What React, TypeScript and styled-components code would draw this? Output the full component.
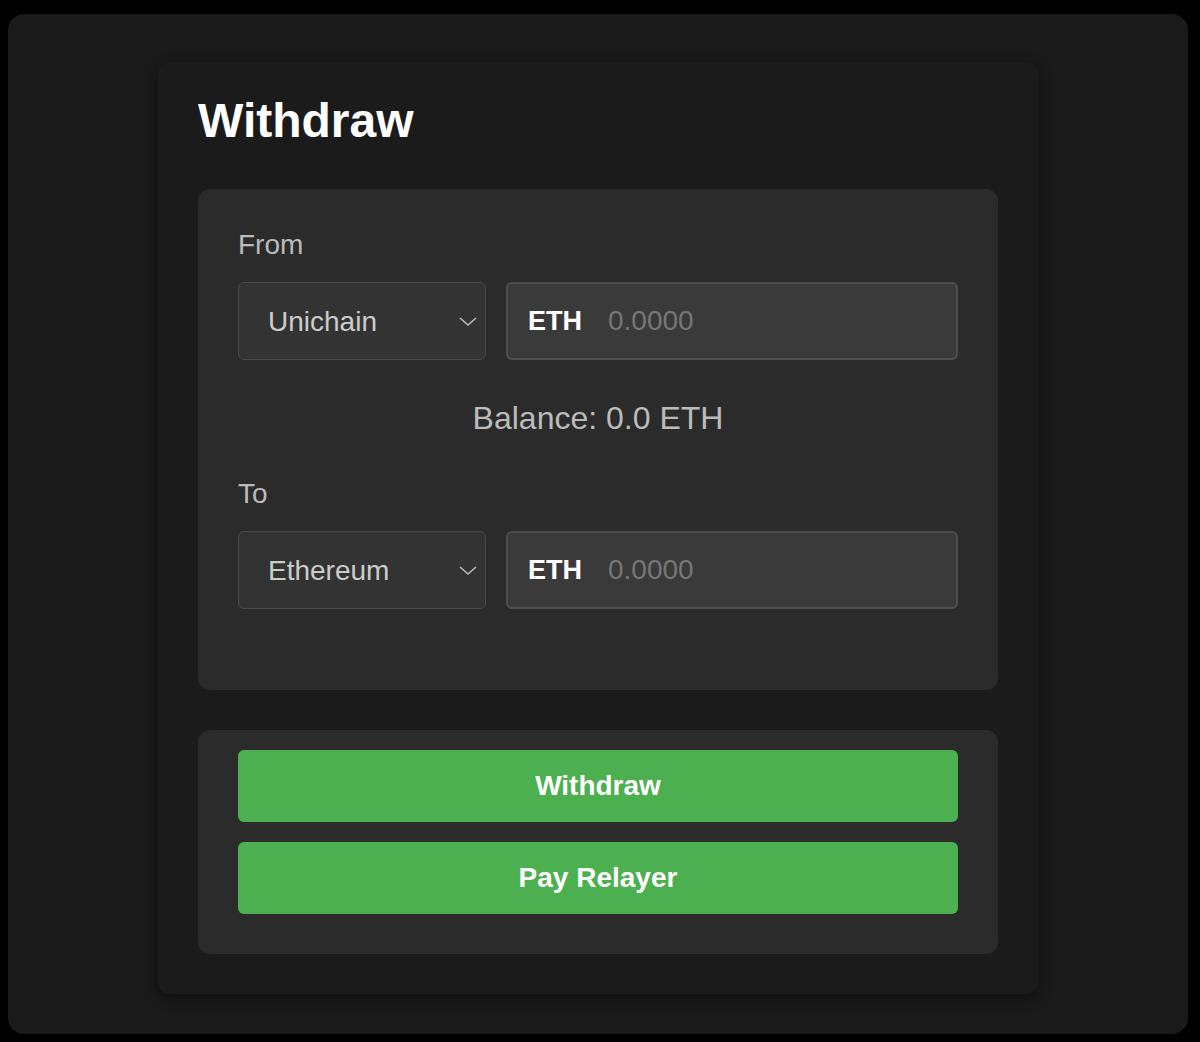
import React from "react"
import styled, { createGlobalStyle } from "styled-components"

const GlobalStyle = createGlobalStyle`
  html, body {
    margin: 0;
    padding: 0;
    background: #000000;
  }
  body {
    font-family: "Liberation Sans", Arial, sans-serif;
  }
`

const Screen = styled.div`
  padding: 14px 12px 8px 8px;
  height: 1042px;
  box-sizing: border-box;
`

const Window = styled.div`
  background: #1a1a1a;
  border-radius: 16px;
  height: 1020px;
  box-sizing: border-box;
  padding-top: 48px;
  display: flex;
  justify-content: center;
  align-items: flex-start;
`

const Card = styled.div`
  width: 880px;
  box-sizing: border-box;
  background: #1b1b1b;
  border-radius: 12px;
  box-shadow: 0 4px 14px rgba(0, 0, 0, 0.45);
  padding: 35px 40px 40px;
`

const Title = styled.h1`
  margin: 0 0 44px;
  font-size: 48px;
  line-height: 48px;
  font-weight: 700;
  color: #ffffff;
`

const Panel = styled.div<{ $compact?: boolean }>`
  background: #2b2b2b;
  border-radius: 12px;
  padding: ${(p) => (p.$compact ? "20px 40px 40px" : "40px 40px 81px")};
  display: flex;
  flex-direction: column;
  gap: ${(p) => (p.$compact ? "20px" : "0")};
  & + & {
    margin-top: 40px;
  }
`

const Label = styled.div`
  font-size: 28px;
  line-height: 32px;
  color: #bbbbbb;
  margin-bottom: 21px;
`

const Row = styled.div`
  display: flex;
  gap: 20px;
  height: 78px;
`

const SelectWrap = styled.div`
  position: relative;
  width: 248px;
  flex: none;
`

const Select = styled.select`
  appearance: none;
  width: 100%;
  height: 100%;
  box-sizing: border-box;
  background: #333333;
  border: 1px solid #4a4a4a;
  border-radius: 6px;
  color: #cccccc;
  font-family: "Liberation Sans", Arial, sans-serif;
  font-size: 28px;
  padding: 0 40px 0 29px;
  outline: none;
`

const Chevron = styled.svg`
  position: absolute;
  right: 8px;
  top: 50%;
  margin-top: -7px;
  pointer-events: none;
`

const AmountBox = styled.div`
  flex: 1;
  min-width: 0;
  display: flex;
  align-items: center;
  gap: 26px;
  background: #3a3a3a;
  border: 2px solid #4e4e4e;
  border-radius: 6px;
  padding: 0 20px;
`

const Currency = styled.span`
  font-size: 27px;
  font-weight: 700;
  color: #ffffff;
`

const AmountInput = styled.input`
  flex: 1;
  min-width: 0;
  width: 100%;
  background: transparent;
  border: none;
  outline: none;
  padding: 0;
  font-family: "Liberation Sans", Arial, sans-serif;
  font-size: 28px;
  color: #ffffff;
  &::placeholder {
    color: #777777;
  }
`

const Balance = styled.div`
  text-align: center;
  font-size: 32px;
  line-height: 36px;
  color: #bbbbbb;
  margin: 40px 0 42px;
`

const Button = styled.button`
  height: 72px;
  border: none;
  border-radius: 6px;
  background: #4caf50;
  color: #ffffff;
  font-family: "Liberation Sans", Arial, sans-serif;
  font-size: 28px;
  font-weight: 700;
  cursor: pointer;
`

const ChainSelect = ({ value }: { value: string }) => (
  <SelectWrap>
    <Select defaultValue={value}>
      <option>Unichain</option>
      <option>Ethereum</option>
    </Select>
    <Chevron width="20" height="14" viewBox="0 0 20 14">
      <path d="M2 4 L10 11 L18 4" fill="none" stroke="#bbbbbb" strokeWidth="1.6" />
    </Chevron>
  </SelectWrap>
)

const AmountField = () => (
  <AmountBox>
    <Currency>ETH</Currency>
    <AmountInput placeholder="0.0000" />
  </AmountBox>
)

export default function App() {
  return (
    <>
      <GlobalStyle />
      <Screen>
        <Window>
          <Card>
            <Title>Withdraw</Title>
            <Panel>
              <Label>From</Label>
              <Row>
                <ChainSelect value="Unichain" />
                <AmountField />
              </Row>
              <Balance>Balance: 0.0 ETH</Balance>
              <Label>To</Label>
              <Row>
                <ChainSelect value="Ethereum" />
                <AmountField />
              </Row>
            </Panel>
            <Panel $compact>
              <Button>Withdraw</Button>
              <Button>Pay Relayer</Button>
            </Panel>
          </Card>
        </Window>
      </Screen>
    </>
  )
}
